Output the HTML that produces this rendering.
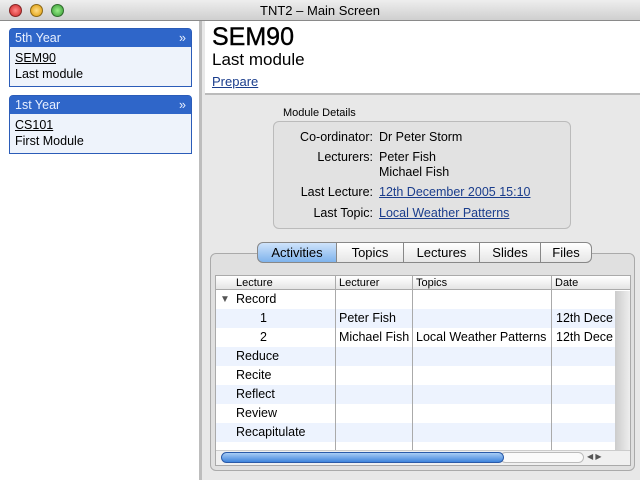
<!DOCTYPE html>
<html><head><style>
*{margin:0;padding:0;box-sizing:border-box}
body{width:640px;height:480px;overflow:hidden;font-family:"Liberation Sans",sans-serif;font-size:12.5px;color:#000;background:#e8e8e8;position:relative}
.a{position:absolute}
.tb{left:0;top:0;width:640px;height:21px;background:linear-gradient(#eeeeee,#cfcfcf);border-bottom:1px solid #8a8a8a;text-align:center;line-height:21px;font-size:13px}
.dot{top:4px;width:13px;height:13px;border-radius:50%;border:1px solid rgba(0,0,0,.4)}
.left{left:0;top:21px;width:202px;height:459px;background:#fff;border-right:3px solid #bdbdbd}
.card{left:9px;width:183px;border:1px solid #2b5cb8;border-radius:4px 4px 0 0;background:#eef3fb}
.card .h{background:#2f66c9;color:#e8f0ff;height:18px;line-height:18px;padding-left:5px;font-size:12.5px}
.card .b{padding:3px 5px;line-height:16px;font-size:12.5px}
u{color:#1a3d8c}
.lbl{width:96px;text-align:right;left:277px}
.val{left:379px}
.tab{top:242px;height:21px;line-height:20px;text-align:center;font-size:13px;border:1px solid #888;background:linear-gradient(#fff,#e6e6e6)}
.row{left:216px;width:399px;height:19px;line-height:19px}
.c{position:absolute;top:0}
</style></head><body>
<div class="a tb">TNT2 – Main Screen</div>
<div class="a dot" style="left:9px;background:radial-gradient(#f88,#c22)"></div>
<div class="a dot" style="left:30px;background:radial-gradient(#fd8,#d90)"></div>
<div class="a dot" style="left:51px;background:radial-gradient(#9e8,#393)"></div>
<div class="a left"></div>
<div class="a card" style="top:28px;height:59px"><div class="h">5th Year<span style="float:right;margin-right:5px">»</span></div><div class="b"><u style="color:#000">SEM90</u><br>Last module</div></div>
<div class="a card" style="top:95px;height:59px"><div class="h">1st Year<span style="float:right;margin-right:5px">»</span></div><div class="b"><u style="color:#000">CS101</u><br>First Module</div></div>
<div class="a" style="left:205px;top:21px;width:435px;height:74px;background:#fff;border-bottom:2px solid #bbb"></div>
<div class="a" style="left:212px;top:23px;font-size:25px;-webkit-text-stroke:0.4px #000">SEM90</div>
<div class="a" style="left:212px;top:50px;font-size:17px">Last module</div>
<div class="a" style="left:212px;top:74px;font-size:13px"><u>Prepare</u></div>
<div class="a" style="left:283px;top:107px;font-size:11px">Module Details</div>
<div class="a" style="left:273px;top:121px;width:298px;height:108px;border:1px solid #bbb;border-radius:6px;background:#e2e2e2"></div>
<div class="a lbl" style="top:130px">Co-ordinator:</div><div class="a val" style="top:130px">Dr Peter Storm</div>
<div class="a lbl" style="top:150px">Lecturers:</div><div class="a val" style="top:150px;line-height:15px">Peter Fish<br>Michael Fish</div>
<div class="a lbl" style="top:185px">Last Lecture:</div><div class="a val" style="top:185px"><u>12th December 2005 15:10</u></div>
<div class="a lbl" style="top:206px">Last Topic:</div><div class="a val" style="top:206px"><u>Local Weather Patterns</u></div>
<div class="a" style="left:210px;top:253px;width:425px;height:218px;border:1px solid #aaa;border-radius:6px;background:#e0e0e0"></div>
<div class="a tab" style="left:257px;width:80px;border-radius:6px 0 0 6px;background:linear-gradient(#cfe3fb,#7fb3ec)">Activities</div>
<div class="a tab" style="left:336px;width:68px">Topics</div>
<div class="a tab" style="left:403px;width:77px">Lectures</div>
<div class="a tab" style="left:479px;width:62px">Slides</div>
<div class="a tab" style="left:540px;width:52px;border-radius:0 6px 6px 0">Files</div>
<div class="a" style="left:215px;top:275px;width:416px;height:191px;background:#fff;border:1px solid #aaa"></div>
<div class="a" style="left:216px;top:276px;width:414px;height:14px;background:linear-gradient(#fff,#e4e4e4);border-bottom:1px solid #aaa;font-size:11px;line-height:14px">
<span class="c" style="left:20px">Lecture</span><span class="c" style="left:123px">Lecturer</span><span class="c" style="left:200px">Topics</span><span class="c" style="left:339px">Date</span></div>
<div class="a row" style="top:290px"><span class="c" style="left:4px;font-size:10px;color:#555">▼</span><span class="c" style="left:20px">Record</span></div>
<div class="a row" style="top:309px;background:#edf3fe"><span class="c" style="left:44px">1</span><span class="c" style="left:123px">Peter Fish</span><span class="c" style="left:340px">12th Dece</span></div>
<div class="a row" style="top:328px"><span class="c" style="left:44px">2</span><span class="c" style="left:123px">Michael Fish</span><span class="c" style="left:200px">Local Weather Patterns</span><span class="c" style="left:340px">12th Dece</span></div>
<div class="a row" style="top:347px;background:#edf3fe"><span class="c" style="left:20px">Reduce</span></div>
<div class="a row" style="top:366px"><span class="c" style="left:20px">Recite</span></div>
<div class="a row" style="top:385px;background:#edf3fe"><span class="c" style="left:20px">Reflect</span></div>
<div class="a row" style="top:404px"><span class="c" style="left:20px">Review</span></div>
<div class="a row" style="top:423px;background:#edf3fe"><span class="c" style="left:20px">Recapitulate</span></div>
<div class="a" style="left:335px;top:276px;width:1px;height:174px;background:#aaa"></div>
<div class="a" style="left:412px;top:276px;width:1px;height:174px;background:#aaa"></div>
<div class="a" style="left:551px;top:276px;width:1px;height:174px;background:#aaa"></div>
<div class="a" style="left:615px;top:291px;width:15px;height:159px;background:linear-gradient(90deg,#ccc,#eee)"></div>
<div class="a" style="left:216px;top:450px;width:414px;height:15px;background:#f0f0f0;border-top:1px solid #ccc"></div>
<div class="a" style="left:500px;top:452px;width:84px;height:11px;border-radius:6px;border:1px solid #bbb;background:#fafafa"></div>
<div class="a" style="left:221px;top:452px;width:283px;height:11px;border-radius:6px;background:linear-gradient(#a9cdf5,#3e84dc);border:1px solid #2a5aa8"></div>
<div class="a" style="left:587px;top:452px;font-size:8px;color:#555">◀ ▶</div>
</body></html>
